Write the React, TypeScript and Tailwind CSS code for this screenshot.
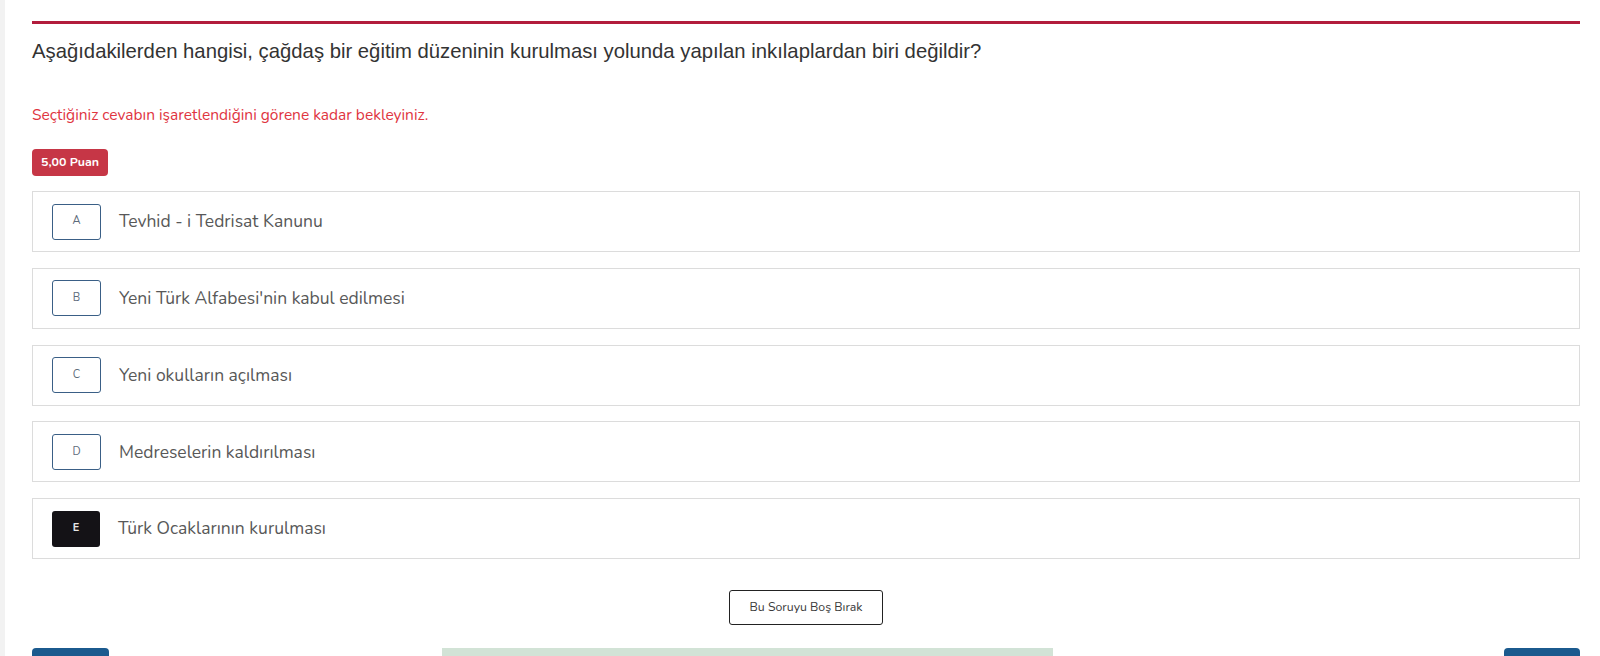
import React from 'react';

const options = [
  { key: 'A', text: 'Tevhid - i Tedrisat Kanunu' },
  { key: 'B', text: "Yeni Türk Alfabesi'nin kabul edilmesi" },
  { key: 'C', text: 'Yeni okulların açılması' },
  { key: 'D', text: 'Medreselerin kaldırılması' },
  { key: 'E', text: 'Türk Ocaklarının kurulması', selected: true },
];

const nunito = { fontFamily: 'Nunito, "Open Sans", Lato, sans-serif' };

function OptionRow({ letter, text, selected }: { letter: string; text: string; selected?: boolean }) {
  return (
    <div className="flex h-[61px] items-center border border-[#dcdcdc] bg-white pl-[19px]">
      <div
        className={
          selected
            ? 'flex h-[36px] w-[48px] items-center justify-center rounded-[3px] bg-[#141216] text-[11px] font-bold text-[#e6e6e6]'
            : 'flex h-[36px] w-[49px] items-center justify-center rounded-[3px] border border-[#3a5f86] text-[11px] text-[#5d6b7b]'
        }
      >
        {letter}
      </div>
      <span className="ml-[18px] text-[17.5px] text-[#585858]">{text}</span>
    </div>
  );
}

export default function App() {
  return (
    <div className="flex h-[656px] w-full items-start overflow-hidden bg-white" style={nunito}>
      {/* left gutter */}
      <div className="h-full w-[5px] shrink-0 bg-[#f2f2f2]" />

      <div className="flex-1 pl-[27px] pr-[20px] pt-[21px]">
        <div className="h-[3px] bg-[#b21c3c]" />

        <h2
          className="mt-[15px] text-[20.3px] leading-[24px] text-[#333333]"
          style={{ fontFamily: '"Liberation Sans", Arial, sans-serif' }}
        >
          Aşağıdakilerden hangisi, çağdaş bir eğitim düzeninin kurulması yolunda yapılan inkılaplardan biri değildir?
        </h2>

        <p className="mt-[42px] text-[15.5px] leading-[20px] text-[#e0353f]">
          Seçtiğiniz cevabın işaretlendiğini görene kadar bekleyiniz.
        </p>

        <div className="mt-[24px] flex">
          <span className="flex h-[27px] w-[76px] items-center justify-center rounded-[4px] bg-[#c63646] text-[12.4px] font-bold text-white">
            5,00 Puan
          </span>
        </div>

        <div className="mt-[15px] flex flex-col gap-[15.75px]">
          {options.map((o) => (
            <OptionRow key={o.key} letter={o.key} text={o.text} selected={o.selected} />
          ))}
        </div>

        <div className="mt-[31px] flex justify-center">
          <button className="h-[35px] w-[154px] rounded-[3px] border border-[#222] bg-white text-[12.3px] text-[#3a3a3a]">
            Bu Soruyu Boş Bırak
          </button>
        </div>

        <div className="mt-[23px] flex">
          <div className="h-[30px] w-[77px] rounded-t-[4px] bg-[#1b5a8e]" />
          <div className="ml-[333px] h-[30px] w-[611px] bg-[#d2e3d6]" />
          <div className="flex-1" />
          <div className="h-[30px] w-[76px] rounded-t-[4px] bg-[#1b5a8e]" />
        </div>
      </div>
    </div>
  );
}
